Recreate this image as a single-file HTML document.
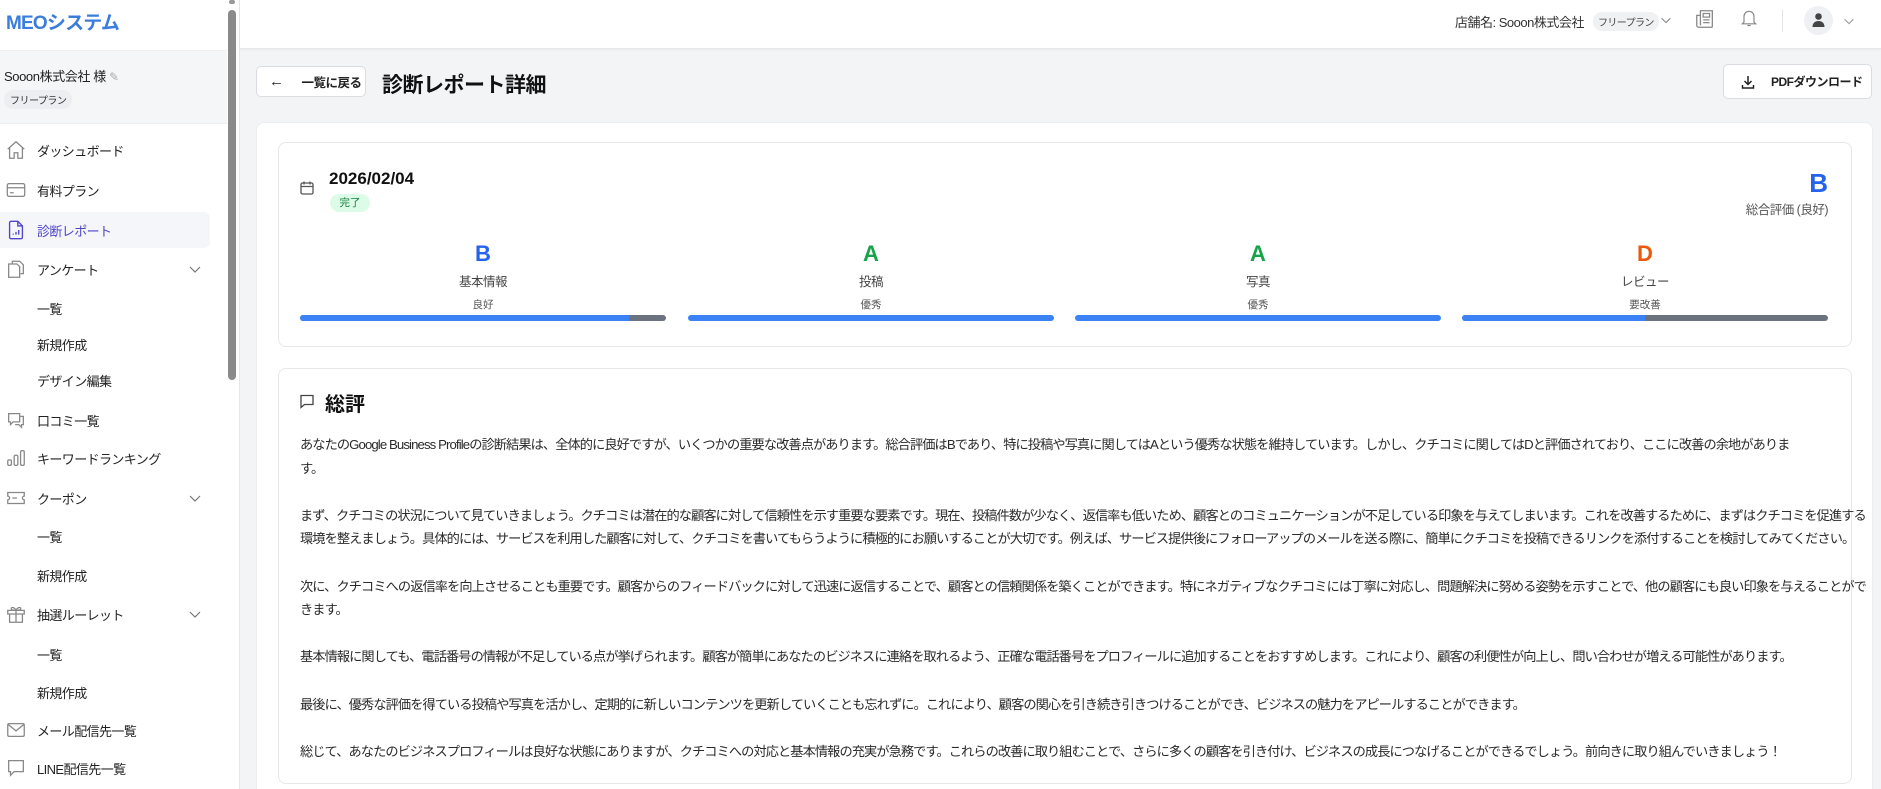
<!DOCTYPE html>
<html style="overflow:hidden;width:1881px;height:789px"><head><meta charset="utf-8"><style>
*{box-sizing:border-box;margin:0;padding:0}
body{width:1881px;height:789px;overflow:hidden;background:#f3f4f6;font-family:"Liberation Sans","Noto Sans CJK JP",sans-serif;color:#222;position:relative}
.abs{position:absolute}
.sb{left:0;top:0;width:240px;height:789px;background:#fff;border-right:1px solid #e5e7eb}
.logo{left:6px;top:8px;font-size:19px;font-weight:bold;color:#3b7ddd;letter-spacing:-0.8px}
.user{left:0;top:50px;width:227px;height:74px;background:#f5f6f8;border-top:1px solid #eee;border-bottom:1px solid #eee}
.nav{left:0;width:227px;height:36px;font-size:13px;color:#222;display:flex;align-items:center;letter-spacing:-0.6px}
.nav .t{position:absolute;left:37px}
.nav svg{position:absolute;left:5px}
.nav .ch{position:absolute;left:187px}
.hdr{left:240px;top:0;width:1641px;height:49px;background:#fff;border-bottom:1px solid #e5e7eb;box-shadow:0 1px 2px rgba(0,0,0,.04)}
.card{background:#fff;border:1px solid #e5e7eb;border-radius:8px}
.btn{background:#fff;border:1px solid #d9dce1;border-radius:5px;font-size:12.5px;font-weight:bold;display:flex;align-items:center;white-space:nowrap;letter-spacing:-0.5px}
.g{position:absolute;width:366px;text-align:center}
.g .l{font-size:22px;font-weight:bold;position:absolute;top:0;width:100%}
.g .n{font-size:12.5px;color:#444;position:absolute;top:30px;width:100%;letter-spacing:-0.5px}
.g .s{font-size:10.5px;color:#555;position:absolute;top:56px;width:100%}
.g .bar{position:absolute;top:74px;left:0;width:366px;height:6px;border-radius:3px;background:#6b7280;overflow:hidden}
.g .bar i{display:block;height:6px;background:#3b82f6}
.txt{left:300px;top:433px;font-size:13.2px;line-height:23.6px;color:#2a2a2a;white-space:nowrap;letter-spacing:-0.9px}
</style></head><body>
<div class="abs sb"></div>
<div class="abs logo">MEOシステム</div>
<div class="abs" style="left:228px;top:10px;width:8px;height:370px;background:#8a8a8a;border-radius:4px"></div>
<div class="abs" style="left:229px;top:0;width:6px;height:4px;background:#999;border-radius:2px"></div>
<div class="abs user"></div>
<div class="abs" style="left:4px;top:66px;font-size:13px;color:#222;letter-spacing:-0.4px">Sooon株式会社 様 <span style="color:#aaa;font-size:12px">✎</span></div>
<div class="abs" style="left:4px;top:90px;font-size:10px;background:#eceef1;border-radius:9px;padding:2px 6px;color:#333;letter-spacing:-0.5px">フリープラン</div>

<div class="abs nav" style="top:132px"><svg width="22" height="22" viewBox="0 0 24 24" fill="none" stroke="#888" stroke-width="1.4"><path d="M3 11l9-8 9 8M5 9.5V21h5v-6h4v6h5V9.5"/></svg><span class="t">ダッシュボード</span></div>
<div class="abs nav" style="top:172px"><svg width="22" height="22" viewBox="0 0 24 24" fill="none" stroke="#888" stroke-width="1.4"><rect x="2.5" y="5" width="19" height="14" rx="2"/><path d="M2.5 9.5h19M5.5 15h4"/></svg><span class="t">有料プラン</span></div>
<div class="abs" style="left:0;top:212px;width:210px;height:36px;background:#f5f6fa;border-radius:0 6px 6px 0"></div>
<div class="abs nav" style="top:212px;color:#5046c8"><svg width="22" height="22" viewBox="0 0 24 24" fill="none" stroke="#5046c8" stroke-width="1.5"><path d="M14 2.5H6.5a1.5 1.5 0 00-1.5 1.5v16a1.5 1.5 0 001.5 1.5h11a1.5 1.5 0 001.5-1.5V7.5z M14 2.5V7.5h5M9 17v-1M12 17v-3M15 17v-5"/></svg><span class="t">診断レポート</span></div>
<div class="abs nav" style="top:251px"><svg width="22" height="22" viewBox="0 0 24 24" fill="none" stroke="#888" stroke-width="1.4"><path d="M8 6V3.5h8l4 4V17h-3M4 6.5h9l3 3V21H4z"/></svg><span class="t">アンケート</span><svg class="ch" width="16" height="16" viewBox="0 0 16 16" fill="none" stroke="#777" stroke-width="1.2"><path d="M3 6l5 5 5-5"/></svg></div>
<div class="abs nav" style="top:290px"><span class="t">一覧</span></div>
<div class="abs nav" style="top:326px"><span class="t">新規作成</span></div>
<div class="abs nav" style="top:362px"><span class="t">デザイン編集</span></div>
<div class="abs nav" style="top:402px"><svg width="22" height="22" viewBox="0 0 24 24" fill="none" stroke="#888" stroke-width="1.4"><path d="M4 5h12v9H9l-3 3v-3H4z M16 8h4v9h-2v3l-3-3h-4"/></svg><span class="t">口コミ一覧</span></div>
<div class="abs nav" style="top:440px"><svg width="22" height="22" viewBox="0 0 24 24" fill="none" stroke="#888" stroke-width="1.4"><rect x="3" y="14" width="4" height="6" rx="1.5"/><rect x="10" y="9" width="4" height="11" rx="1.5"/><rect x="17" y="4" width="4" height="16" rx="1.5"/></svg><span class="t">キーワードランキング</span></div>
<div class="abs nav" style="top:480px"><svg width="22" height="22" viewBox="0 0 24 24" fill="none" stroke="#888" stroke-width="1.4"><path d="M3 6h18v4a2 2 0 000 4v4H3v-4a2 2 0 000-4z M8 12h5"/></svg><span class="t">クーポン</span><svg class="ch" width="16" height="16" viewBox="0 0 16 16" fill="none" stroke="#777" stroke-width="1.2"><path d="M3 6l5 5 5-5"/></svg></div>
<div class="abs nav" style="top:518px"><span class="t">一覧</span></div>
<div class="abs nav" style="top:557px"><span class="t">新規作成</span></div>
<div class="abs nav" style="top:596px"><svg width="22" height="22" viewBox="0 0 24 24" fill="none" stroke="#888" stroke-width="1.4"><path d="M3 8h18v4H3z M5 12v9h14v-9 M12 8v13 M12 8c-2-4-6-4-5-1 1 1 5 1 5 1 0 0 4 0 5-1 1-3-3-3-5 1"/></svg><span class="t">抽選ルーレット</span><svg class="ch" width="16" height="16" viewBox="0 0 16 16" fill="none" stroke="#777" stroke-width="1.2"><path d="M3 6l5 5 5-5"/></svg></div>
<div class="abs nav" style="top:636px"><span class="t">一覧</span></div>
<div class="abs nav" style="top:674px"><span class="t">新規作成</span></div>
<div class="abs nav" style="top:712px"><svg width="22" height="22" viewBox="0 0 24 24" fill="none" stroke="#888" stroke-width="1.4"><rect x="3" y="5" width="18" height="14" rx="1.5"/><path d="M3.5 6l8.5 7 8.5-7"/></svg><span class="t">メール配信先一覧</span></div>
<div class="abs nav" style="top:750px"><svg width="22" height="22" viewBox="0 0 24 24" fill="none" stroke="#888" stroke-width="1.4"><path d="M4 4h16v12H10l-4 4v-4H4z"/></svg><span class="t">LINE配信先一覧</span></div>

<div class="abs hdr"></div>
<div class="abs" style="left:1455px;top:12px;font-size:13px;color:#333;letter-spacing:-0.5px">店舗名: Sooon株式会社</div>
<div class="abs" style="left:1593px;top:12px;font-size:10px;color:#444;background:#f0f1f3;border-radius:9px;padding:2px 5px;letter-spacing:-0.6px">フリープラン</div>
<svg class="abs" style="left:1659px;top:13px" width="14" height="14" viewBox="0 0 16 16" fill="none" stroke="#888" stroke-width="1.2"><path d="M3 6l5 5 5-5"/></svg>
<svg class="abs" style="left:1694px;top:8px" width="22" height="22" viewBox="0 0 24 24" fill="none" stroke="#888" stroke-width="1.4"><path d="M7 3h13v17a1 1 0 01-1 1H5a2 2 0 01-2-2V8h4z M7 3v16 M10 6h7v4h-7z M10 13h7M10 16h7"/></svg>
<svg class="abs" style="left:1739px;top:8px" width="20" height="20" viewBox="0 0 24 24" fill="none" stroke="#888" stroke-width="1.4"><path d="M6 17V10a6 6 0 0112 0v7l2 2H4z M10 21h4"/></svg>
<div class="abs" style="left:1782px;top:10px;width:1px;height:22px;background:#e2e4e8"></div>
<div class="abs" style="left:1804px;top:6px;width:29px;height:29px;border-radius:50%;background:#eef0f3"></div>
<svg class="abs" style="left:1811px;top:12px" width="15" height="16" viewBox="0 0 15 16"><circle cx="7.5" cy="4.5" r="3.3" fill="#444"/><path d="M1.5 15c0-4 2.5-6 6-6s6 2 6 6z" fill="#444"/></svg>
<svg class="abs" style="left:1842px;top:14px" width="14" height="14" viewBox="0 0 16 16" fill="none" stroke="#999" stroke-width="1.2"><path d="M3 6l5 5 5-5"/></svg>

<div class="abs btn" style="left:256px;top:66px;width:110px;height:31px"><span style="margin-left:12px;font-size:15px;font-weight:normal">←</span><span style="margin-left:18px">一覧に戻る</span></div>
<div class="abs" style="left:382px;top:69px;font-size:21px;font-weight:bold;color:#111;letter-spacing:-0.5px">診断レポート詳細</div>
<div class="abs btn" style="left:1723px;top:64px;width:149px;height:35px;font-size:12px"><svg style="margin-left:16px;flex:none" width="16" height="16" viewBox="0 0 16 16" fill="none" stroke="#222" stroke-width="1.5"><path d="M8 2v8M4.5 7L8 10.5 11.5 7M2.5 11v3h11v-3"/></svg><span style="margin-left:15px">PDFダウンロード</span></div>

<div class="abs card" style="left:256px;top:122px;width:1617px;height:680px;border-color:#eceef1"></div>
<div class="abs card" style="left:278px;top:142px;width:1574px;height:205px"></div>
<svg class="abs" style="left:299px;top:180px" width="16" height="16" viewBox="0 0 16 16" fill="none" stroke="#555" stroke-width="1.3"><rect x="2" y="3" width="12" height="11" rx="1.5"/><path d="M2 6.5h12M5 1.5v3M11 1.5v3"/></svg>
<div class="abs" style="left:329px;top:169px;font-size:17px;font-weight:bold;color:#111">2026/02/04</div>
<div class="abs" style="left:330px;top:194px;width:40px;height:18px;border-radius:9px;background:#dcfce7;color:#15803d;font-size:10.5px;text-align:center;line-height:18px">完了</div>
<div class="abs" style="left:1700px;top:168px;width:128px;text-align:right;font-size:26px;font-weight:bold;color:#2563eb;line-height:30px">B</div>
<div class="abs" style="left:1650px;top:199px;width:178px;text-align:right;font-size:12.5px;color:#555;letter-spacing:-0.5px">総合評価 (良好)</div>

<div class="g" style="left:300px;top:241px"><div class="l" style="color:#2563eb">B</div><div class="n">基本情報</div><div class="s">良好</div><div class="bar"><i style="width:90%"></i></div></div>
<div class="g" style="left:688px;top:241px"><div class="l" style="color:#16a34a">A</div><div class="n">投稿</div><div class="s">優秀</div><div class="bar"><i style="width:100%"></i></div></div>
<div class="g" style="left:1075px;top:241px"><div class="l" style="color:#16a34a">A</div><div class="n">写真</div><div class="s">優秀</div><div class="bar"><i style="width:100%"></i></div></div>
<div class="g" style="left:1462px;top:241px"><div class="l" style="color:#ea580c">D</div><div class="n">レビュー</div><div class="s">要改善</div><div class="bar"><i style="width:50%"></i></div></div>

<div class="abs card" style="left:278px;top:368px;width:1574px;height:416px"></div>
<svg class="abs" style="left:299px;top:393px" width="16" height="16" viewBox="0 0 16 16" fill="none" stroke="#444" stroke-width="1.3"><path d="M2 2.5h12v9H5.5L2 14.5z"/></svg>
<div class="abs" style="left:325px;top:388px;font-size:20px;font-weight:bold;color:#111">総評</div>
<div class="abs txt">あなたのGoogle Business Profileの診断結果は、全体的に良好ですが、いくつかの重要な改善点があります。総合評価はBであり、特に投稿や写真に関してはAという優秀な状態を維持しています。しかし、クチコミに関してはDと評価されており、ここに改善の余地がありま<br>す。<br><br>まず、クチコミの状況について見ていきましょう。クチコミは潜在的な顧客に対して信頼性を示す重要な要素です。現在、投稿件数が少なく、返信率も低いため、顧客とのコミュニケーションが不足している印象を与えてしまいます。これを改善するために、まずはクチコミを促進する<br>環境を整えましょう。具体的には、サービスを利用した顧客に対して、クチコミを書いてもらうように積極的にお願いすることが大切です。例えば、サービス提供後にフォローアップのメールを送る際に、簡単にクチコミを投稿できるリンクを添付することを検討してみてください。<br><br>次に、クチコミへの返信率を向上させることも重要です。顧客からのフィードバックに対して迅速に返信することで、顧客との信頼関係を築くことができます。特にネガティブなクチコミには丁寧に対応し、問題解決に努める姿勢を示すことで、他の顧客にも良い印象を与えることがで<br>きます。<br><br>基本情報に関しても、電話番号の情報が不足している点が挙げられます。顧客が簡単にあなたのビジネスに連絡を取れるよう、正確な電話番号をプロフィールに追加することをおすすめします。これにより、顧客の利便性が向上し、問い合わせが増える可能性があります。<br><br>最後に、優秀な評価を得ている投稿や写真を活かし、定期的に新しいコンテンツを更新していくことも忘れずに。これにより、顧客の関心を引き続き引きつけることができ、ビジネスの魅力をアピールすることができます。<br><br>総じて、あなたのビジネスプロフィールは良好な状態にありますが、クチコミへの対応と基本情報の充実が急務です。これらの改善に取り組むことで、さらに多くの顧客を引き付け、ビジネスの成長につなげることができるでしょう。前向きに取り組んでいきましょう！</div>
</body></html>
